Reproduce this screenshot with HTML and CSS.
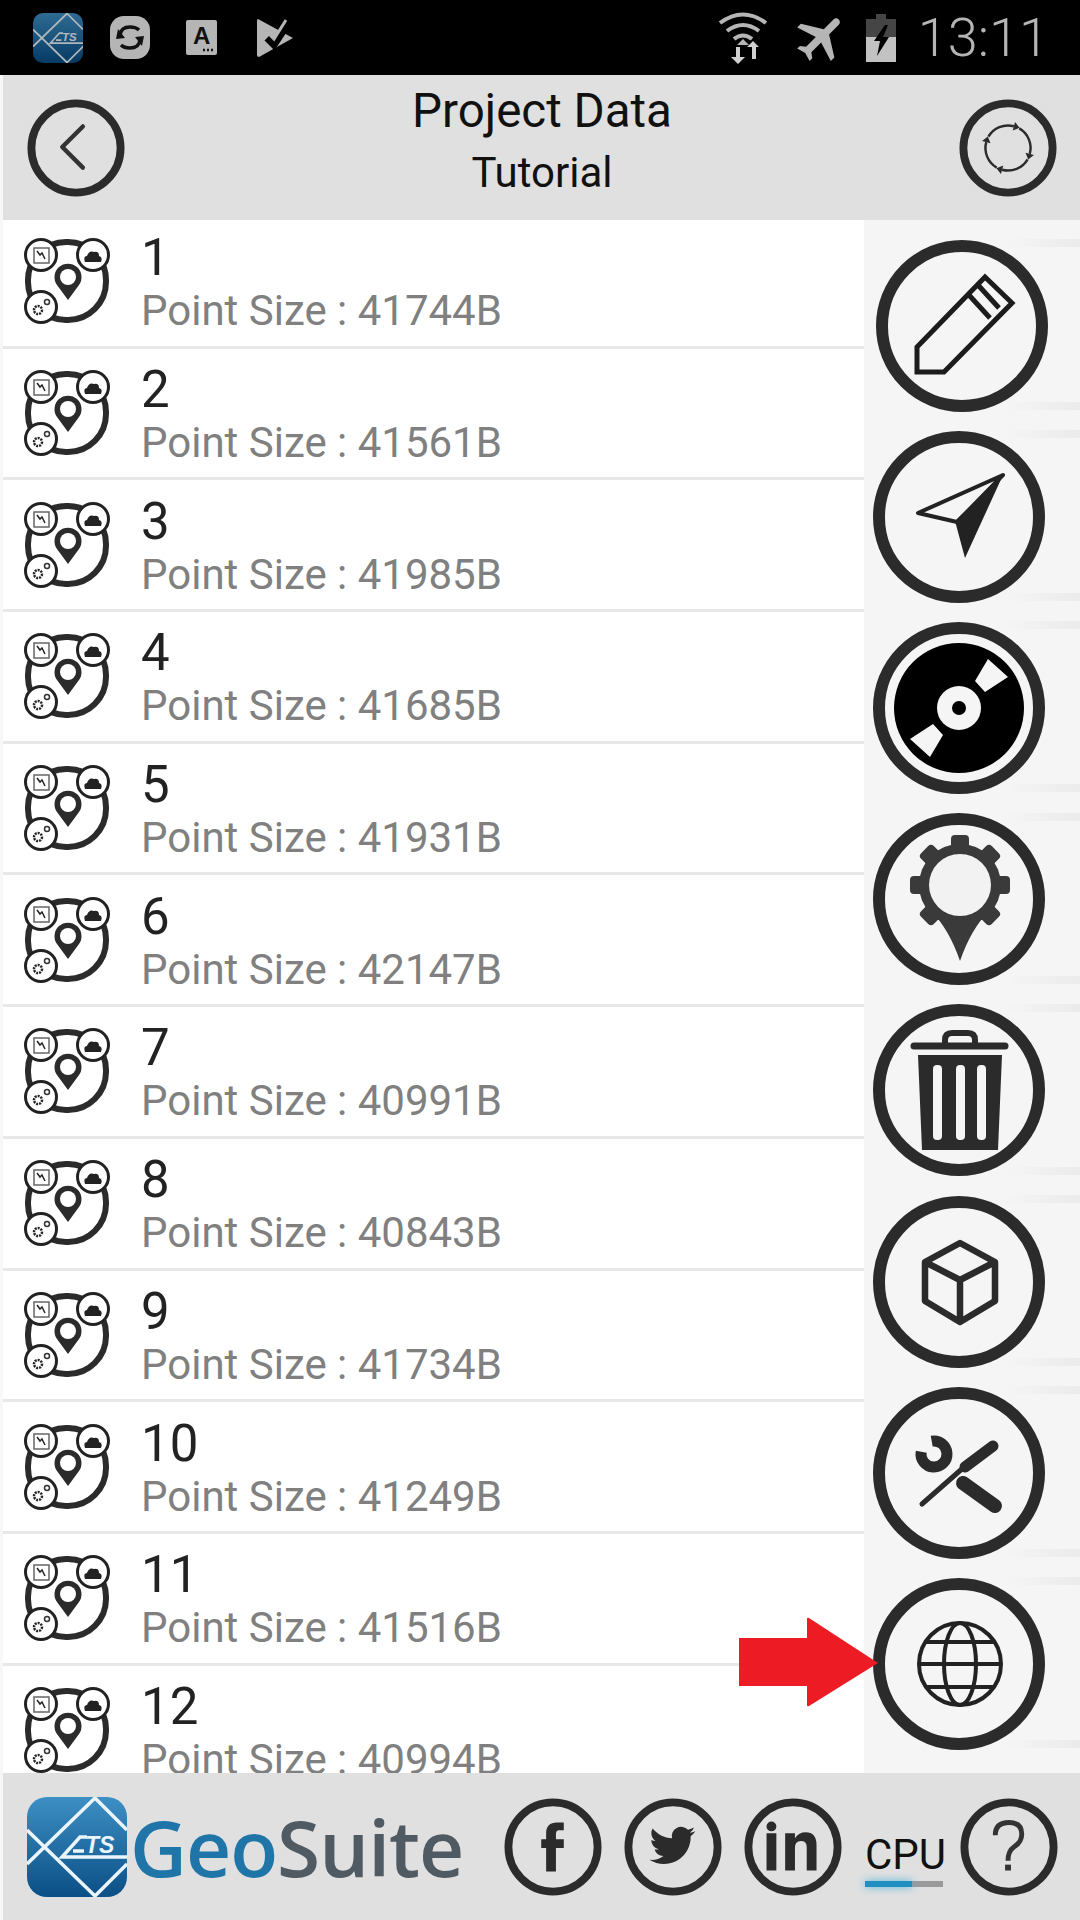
FILE: index.html
```html
<!DOCTYPE html>
<html lang="en">
<head>
<meta charset="UTF-8">
<meta name="viewport" content="width=device-width, initial-scale=1.0">
<title>Project Data</title>
<link rel="stylesheet" href="styles.css">
</head>
<body>

<svg class="defs" width="0" height="0">
    <defs>
        <linearGradient id="logoBlue" x1="0" y1="0" x2="0" y2="1">
            <stop offset="0" stop-color="#3d8fc4"/>
            <stop offset="1" stop-color="#0a4f86"/>
        </linearGradient>
    </defs>
    <symbol id="logo" viewBox="0 0 100 100">
        <rect width="100" height="100" rx="20" fill="url(#logoBlue)"/>
        <path d="M100 33 L68 1 L0 67 M100 67 L68 99 L0 33" fill="none" stroke="#eaf5fb" stroke-width="3.500"/>
        <path d="M100 60 H35 L53 40 H60 M46 54 H57" fill="none" stroke="#eaf5fb" stroke-width="3.500"/>
        <text x="58" y="56" class="logo-ts">TS</text>
    </symbol>
    <symbol id="row-icon" viewBox="0 0 86 86">
        <rect x="4" y="4" width="78" height="78" rx="38" fill="#fff" stroke="#2b2b2b" stroke-width="6"/>
        <circle cx="17" cy="17" r="15.500" fill="#fff" stroke="#222" stroke-width="3"/>
        <circle cx="69" cy="17" r="15.500" fill="#fff" stroke="#222" stroke-width="3"/>
        <circle cx="17" cy="69" r="15.500" fill="#fff" stroke="#222" stroke-width="3"/>
        <rect x="10" y="10" width="15" height="15" fill="none" stroke="#666" stroke-width="1.500"/>
        <path d="M13 13 L16 17 L18 15 L21 21" fill="none" stroke="#222" stroke-width="1.500"/>
        <path d="M61 24 Q59 18 63 18 Q65 12 70 14 Q75 13 75 18 Q79 19 77 24 Z" fill="#222"/>
        <circle cx="14" cy="72" r="4" fill="none" stroke="#222" stroke-width="2.500" stroke-dasharray="2 1"/>
        <circle cx="23" cy="64" r="2.500" fill="none" stroke="#333" stroke-width="1.500"/>
        <path d="M44 62 L33 47 A13.500 13.500 0 1 1 55 47 Z" fill="#2b2b2b"/>
        <circle cx="44" cy="39" r="8" fill="#fff"/>
    </symbol>
    <symbol id="back" viewBox="0 0 100 100">
        <circle cx="50" cy="50" r="45.500" fill="none" stroke="#2b2b2b" stroke-width="8"/>
        <path d="M57 28 L36 49 L57 70" fill="none" stroke="#333" stroke-width="4.500" stroke-linecap="round" stroke-linejoin="round"/>
    </symbol>
    <symbol id="refresh-arc" viewBox="0 0 100 100">
        <path d="M30 38.500 A23 23 0 0 1 56 27.800" fill="none" stroke="#2b2b2b" stroke-width="2.500"/>
        <path d="M61.800 29.400 L57.200 23.500 L54.800 32.100 Z" fill="#2b2b2b"/>
    </symbol>
    <symbol id="refresh" viewBox="0 0 100 100">
        <circle cx="50" cy="50" r="45.500" fill="none" stroke="#2b2b2b" stroke-width="8"/>
        <use href="#refresh-arc" width="100" height="100"/>
        <use href="#refresh-arc" width="100" height="100" transform="rotate(90 50 50)"/>
        <use href="#refresh-arc" width="100" height="100" transform="rotate(180 50 50)"/>
        <use href="#refresh-arc" width="100" height="100" transform="rotate(270 50 50)"/>
    </symbol>
    <symbol id="pencil" viewBox="0 0 172 172">
        <circle cx="86" cy="86" r="80" fill="none" stroke="#2b2b2b" stroke-width="12"/>
        <path d="M41 132 V107 L109 37 L136 63 L68 132 Z M92 54 L114 78 M102 45 L123 68" fill="none" stroke="#1c1c1c" stroke-width="5"/>
    </symbol>
    <symbol id="nav" viewBox="0 0 172 172">
        <circle cx="86" cy="86" r="80" fill="none" stroke="#2b2b2b" stroke-width="12"/>
        <path d="M130 44 L45 82 L84 91 Z" fill="none" stroke="#222" stroke-width="4" stroke-linejoin="round"/>
        <path d="M130 44 L82 90 L92 127 Z" fill="#222"/>
    </symbol>
    <symbol id="disc" viewBox="0 0 172 172">
        <circle cx="86" cy="86" r="80" fill="none" stroke="#2b2b2b" stroke-width="12"/>
        <circle cx="86" cy="86" r="65" fill="#000"/>
        <circle cx="86" cy="86" r="22" fill="#f5f5f5"/>
        <circle cx="86" cy="86" r="7" fill="#000"/>
        <path d="M115 37 L135 55 L112 70 L102 59 Z M57 135 L37 117 L60 102 L70 113 Z" fill="#f5f5f5"/>
    </symbol>
    <symbol id="gearpin" viewBox="0 0 172 172">
        <circle cx="86" cy="86" r="80" fill="none" stroke="#2b2b2b" stroke-width="12"/>
        <g fill="#3a3a3a">
            <rect x="78" y="22" width="18" height="16" rx="4"/>
            <rect x="78" y="22" width="18" height="16" rx="4" transform="rotate(45 87 72)"/>
            <rect x="78" y="22" width="18" height="16" rx="4" transform="rotate(90 87 72)"/>
            <rect x="78" y="22" width="18" height="16" rx="4" transform="rotate(135 87 72)"/>
            <rect x="78" y="22" width="18" height="16" rx="4" transform="rotate(225 87 72)"/>
            <rect x="78" y="22" width="18" height="16" rx="4" transform="rotate(270 87 72)"/>
            <rect x="78" y="22" width="18" height="16" rx="4" transform="rotate(315 87 72)"/>
            <circle cx="87" cy="72" r="41"/>
            <path d="M58 98 L116 98 Q98 116 87 148 Q76 116 58 98 Z"/>
        </g>
        <circle cx="87" cy="72" r="31" fill="#f2f2f2"/>
    </symbol>
    <symbol id="trash" viewBox="0 0 172 172">
        <circle cx="86" cy="86" r="80" fill="none" stroke="#2b2b2b" stroke-width="12"/>
        <path d="M41 42 H132" fill="none" stroke="#2b2b2b" stroke-width="7" stroke-linecap="round"/>
        <path d="M72 40 V36 Q72 29 79 29 H95 Q102 29 102 36 V40" fill="none" stroke="#2b2b2b" stroke-width="6"/>
        <path d="M45 51 H129 L125 146 H49 Z" fill="#2b2b2b"/>
        <g fill="#f5f5f5">
            <rect x="60" y="61" width="9" height="75" rx="4"/>
            <rect x="83" y="61" width="9" height="75" rx="4"/>
            <rect x="104" y="61" width="9" height="75" rx="4"/>
        </g>
    </symbol>
    <symbol id="cube" viewBox="0 0 172 172">
        <circle cx="86" cy="86" r="80" fill="none" stroke="#2b2b2b" stroke-width="12"/>
        <path d="M87 47 L122 66 V105 L87 126 L52 105 V66 Z M52 66 L87 84 L122 66 M87 84 V126" fill="none" stroke="#2b2b2b" stroke-width="6.500" stroke-linejoin="round"/>
    </symbol>
    <symbol id="tools" viewBox="0 0 172 172">
        <circle cx="86" cy="86" r="80" fill="none" stroke="#2b2b2b" stroke-width="12"/>
        <path d="M58.700 54.200 A13 13 0 1 1 48.200 64.700" fill="none" stroke="#2b2b2b" stroke-width="11"/>
        <path d="M90 96 L122 119" fill="none" stroke="#2b2b2b" stroke-width="14" stroke-linecap="round"/>
        <path d="M49 117 L90 81" fill="none" stroke="#2b2b2b" stroke-width="5" stroke-linecap="round"/>
        <path d="M92 80 L120 59" fill="none" stroke="#2b2b2b" stroke-width="11" stroke-linecap="round"/>
    </symbol>
    <symbol id="globe" viewBox="0 0 172 172">
        <circle cx="86" cy="86" r="80" fill="none" stroke="#2b2b2b" stroke-width="12"/>
        <g fill="none" stroke="#222" stroke-width="4">
            <circle cx="87" cy="86" r="41"/>
            <ellipse cx="87" cy="86" rx="16" ry="41"/>
            <path d="M53 64 H121 M46 86 H128 M53 109 H121"/>
        </g>
    </symbol>
    <symbol id="fb" viewBox="0 0 100 100">
        <circle cx="50" cy="50" r="45.500" fill="none" stroke="#2b2b2b" stroke-width="8"/>
        <path d="M43 75 V51 H38 V42 H43 V36 Q43 25 54 25 H61 V33 H56 Q53 33 53 37 V42 H61 V51 H53 V75 Z" fill="#2b2b2b"/>
    </symbol>
    <symbol id="tw" viewBox="0 0 100 100">
        <circle cx="50" cy="50" r="45.500" fill="none" stroke="#2b2b2b" stroke-width="8"/>
        <path transform="translate(26 25) scale(1.95)" d="M23.953 4.57a10 10 0 01-2.825.775 4.958 4.958 0 002.163-2.723c-.951.555-2.005.959-3.127 1.184a4.92 4.92 0 00-8.384 4.482C7.69 8.095 4.067 6.13 1.64 3.162a4.822 4.822 0 00-.666 2.475c0 1.71.87 3.213 2.188 4.096a4.904 4.904 0 01-2.228-.616v.06a4.923 4.923 0 003.946 4.827 4.996 4.996 0 01-2.212.085 4.936 4.936 0 004.604 3.417 9.867 9.867 0 01-6.102 2.105c-.39 0-.779-.023-1.17-.067a13.995 13.995 0 007.557 2.209c9.053 0 13.998-7.496 13.998-13.985 0-.21 0-.42-.015-.63A9.935 9.935 0 0024 4.59z" fill="#2b2b2b"/>
    </symbol>
    <symbol id="in" viewBox="0 0 100 100">
        <circle cx="50" cy="50" r="45.500" fill="none" stroke="#2b2b2b" stroke-width="8"/>
        <circle cx="28" cy="29" r="5" fill="#2b2b2b"/>
        <path d="M23 36 H33 V74 H23 Z M42 36 H52 V41 Q56 35 63 35 Q74 35 74 48 V74 H64 V50 Q64 44 58 44 Q52 44 52 51 V74 H42 Z" fill="#2b2b2b"/>
    </symbol>
    <symbol id="help" viewBox="0 0 100 100">
        <circle cx="50" cy="50" r="45.500" fill="none" stroke="#2b2b2b" stroke-width="8"/>
        <path d="M36 38 Q36 25 50 25 Q63 25 63 37 Q63 45 55 50 Q49 54 49 64" fill="none" stroke="#333" stroke-width="5"/>
        <rect x="46" y="68" width="6" height="6" fill="#333"/>
    </symbol>
</svg>

<div class="status-bar">
    <svg class="st-app"><use href="#logo"/></svg>
    <svg class="st-sync" viewBox="0 0 40 43">
        <rect width="40" height="43" rx="14" fill="#b5b5b5"/>
        <path d="M10 19 Q11 11 20 11 Q26 11 29 14 M30 24 Q29 32 20 32 Q14 32 11 29" fill="none" stroke="#111" stroke-width="3.500"/>
        <path d="M8 13 L15 22 L6 23 Z M32 30 L25 21 L34 20 Z" fill="#111"/>
    </svg>
    <svg class="st-a" viewBox="0 0 31 35">
        <rect width="31" height="35" rx="2" fill="#b5b5b5"/>
        <text x="7" y="24" class="st-a-text">A</text>
        <path d="M17 30 H19 M21 30 H23 M25 30 H27" stroke="#111" stroke-width="2.500"/>
    </svg>
    <svg class="st-check" viewBox="0 0 36 38">
        <path d="M1 0 L36 19 L2 38 Q0 38 0 36 V2 Q0 0 1 0 Z" fill="#b5b5b5"/>
        <path d="M10 19 L17 26 L32 3" fill="none" stroke="#000" stroke-width="7"/>
        <path d="M12 15 L17 20 L29 1" fill="none" stroke="#b5b5b5" stroke-width="3"/>
    </svg>
    <div class="status-gap"></div>
    <svg class="st-wifi" viewBox="0 0 50 52">
        <g fill="none" stroke="#b5b5b5" stroke-width="4">
            <path d="M2 11 Q25 -6 48 11"/>
            <path d="M9 19 Q25 7 41 19"/>
            <path d="M16 27 Q25 20 34 27"/>
        </g>
        <path d="M19 33 L25 27 L31 33 Z" fill="#b5b5b5"/>
        <path d="M18 35 V45 H13 L20 52 L27 45 H22 V35 Z M34 47 V35 H29 L35 29 L41 35 H38 V47 Z" fill="#d0d0d0"/>
    </svg>
    <svg class="st-plane" viewBox="0 0 24 24">
        <path transform="rotate(45 12 12)" d="M21 16v-2l-8-5V3.500c0-.83-.67-1.500-1.500-1.500S10 2.670 10 3.500V9l-8 5v2l8-2.500V19l-2 1.500V22l3.500-1 3.500 1v-1.500L13 19v-5.500l8 2.500z" fill="#b5b5b5"/>
    </svg>
    <svg class="st-batt" viewBox="0 0 30 48">
        <path d="M10 0 H20 V5 H30 V48 H0 V5 H10 Z" fill="#454545"/>
        <rect y="23" width="30" height="25" fill="#c2c2c2"/>
        <path d="M19 11 L8 27 H14 L11 42 L23 23 H17 L22 11 Z" fill="#000"/>
    </svg>
    <span class="clock">13:11</span>
</div>

<div class="app">
    <div class="top-bar">
        <svg class="round-btn"><use href="#back"/></svg>
        <div class="titles">
            <div class="title">Project Data</div>
            <div class="subtitle">Tutorial</div>
        </div>
        <svg class="round-btn"><use href="#refresh"/></svg>
    </div>

    <div class="main">
        <ul class="points">
            <li class="point"><svg class="point-icon"><use href="#row-icon"/></svg><div><div class="point-name">1</div><div class="point-size">Point Size : 41744B</div></div></li>
            <li class="point"><svg class="point-icon"><use href="#row-icon"/></svg><div><div class="point-name">2</div><div class="point-size">Point Size : 41561B</div></div></li>
            <li class="point"><svg class="point-icon"><use href="#row-icon"/></svg><div><div class="point-name">3</div><div class="point-size">Point Size : 41985B</div></div></li>
            <li class="point"><svg class="point-icon"><use href="#row-icon"/></svg><div><div class="point-name">4</div><div class="point-size">Point Size : 41685B</div></div></li>
            <li class="point"><svg class="point-icon"><use href="#row-icon"/></svg><div><div class="point-name">5</div><div class="point-size">Point Size : 41931B</div></div></li>
            <li class="point"><svg class="point-icon"><use href="#row-icon"/></svg><div><div class="point-name">6</div><div class="point-size">Point Size : 42147B</div></div></li>
            <li class="point"><svg class="point-icon"><use href="#row-icon"/></svg><div><div class="point-name">7</div><div class="point-size">Point Size : 40991B</div></div></li>
            <li class="point"><svg class="point-icon"><use href="#row-icon"/></svg><div><div class="point-name">8</div><div class="point-size">Point Size : 40843B</div></div></li>
            <li class="point"><svg class="point-icon"><use href="#row-icon"/></svg><div><div class="point-name">9</div><div class="point-size">Point Size : 41734B</div></div></li>
            <li class="point"><svg class="point-icon"><use href="#row-icon"/></svg><div><div class="point-name">10</div><div class="point-size">Point Size : 41249B</div></div></li>
            <li class="point"><svg class="point-icon"><use href="#row-icon"/></svg><div><div class="point-name">11</div><div class="point-size">Point Size : 41516B</div></div></li>
            <li class="point"><svg class="point-icon"><use href="#row-icon"/></svg><div><div class="point-name">12</div><div class="point-size">Point Size : 40994B</div></div></li>
        </ul>

        <div class="side">
            <div class="side-item side-first"><svg class="side-btn"><use href="#pencil"/></svg></div>
            <div class="side-item"><svg class="side-btn"><use href="#nav"/></svg></div>
            <div class="side-item"><svg class="side-btn"><use href="#disc"/></svg></div>
            <div class="side-item"><svg class="side-btn"><use href="#gearpin"/></svg></div>
            <div class="side-item"><svg class="side-btn"><use href="#trash"/></svg></div>
            <div class="side-item"><svg class="side-btn"><use href="#cube"/></svg></div>
            <div class="side-item"><svg class="side-btn"><use href="#tools"/></svg></div>
            <div class="side-item"><svg class="side-btn"><use href="#globe"/></svg></div>
        </div>

        <svg class="red-arrow" viewBox="0 0 140 90">
            <path d="M1 21 H69 V2 Q69 0 71 1 L140 46 L71 89 Q69 90 69 88 V69 H1 Z" fill="#ed1c24"/>
        </svg>
    </div>

    <div class="bottom-bar">
        <svg class="brand-logo"><use href="#logo"/></svg>
        <div class="brand"><span class="brand-geo">Geo</span><span class="brand-suite">Suite</span></div>
        <div class="socials">
            <svg class="round-btn"><use href="#fb"/></svg>
            <svg class="round-btn"><use href="#tw"/></svg>
            <svg class="round-btn"><use href="#in"/></svg>
        </div>
        <div class="cpu">
            <div class="cpu-label">CPU</div>
            <div class="cpu-bar"><div class="cpu-fill"></div></div>
        </div>
        <svg class="round-btn"><use href="#help"/></svg>
    </div>
</div>

</body>
</html>
```

FILE: styles.css
```css
* {
    box-sizing: border-box;
}

html, body {
    margin: 0;
    padding: 0;
    height: 1920px;
    overflow: hidden;
}

body {
    font-family: Roboto, Arial, sans-serif;
    background-color: #f7f7f7;
    display: flex;
    flex-direction: column;
}

.defs {
    position: absolute;
}

.logo-ts {
    font-family: "Liberation Sans", sans-serif;
    font-size: 23px;
    font-weight: bold;
    font-style: italic;
    fill: #eaf5fb;
}

/* status bar */
.status-bar {
    height: 75px;
    flex: none;
    background-color: #000;
    display: flex;
    align-items: center;
    padding-left: 33px;
    padding-right: 31px;
}

.st-app {
    width: 50px;
    height: 50px;
    opacity: 0.75;
}

.st-sync {
    width: 40px;
    height: 43px;
    margin-left: 27px;
}

.st-a {
    width: 31px;
    height: 35px;
    margin-left: 36px;
}

.st-a-text {
    font-family: "Liberation Sans", sans-serif;
    font-size: 24px;
    font-weight: bold;
    fill: #111;
}

.st-check {
    width: 36px;
    height: 38px;
    margin-left: 40px;
}

.status-gap {
    flex: 1;
}

.st-wifi {
    width: 50px;
    height: 52px;
}

.st-plane {
    width: 60px;
    height: 60px;
    margin-left: 24px;
}

.st-batt {
    width: 30px;
    height: 48px;
    margin-left: 14px;
}

.clock {
    font-weight: 300;
    font-size: 54px;
    color: #b5b5b5;
    margin-left: 22px;
}

/* page */
.app {
    flex: 1;
    min-height: 0;
    padding-left: 3px;
    display: flex;
    flex-direction: column;
}

.top-bar {
    height: 145px;
    flex: none;
    background-color: #e0e0e0;
    display: flex;
    align-items: center;
    padding: 0 23px 0 24px;
}

.round-btn {
    width: 98px;
    height: 98px;
    flex: none;
}

.titles {
    flex: 1;
    text-align: center;
    color: #111;
    margin-bottom: 14px;
}

.title {
    font-size: 47.5px;
    line-height: 56px;
}

.subtitle {
    font-size: 42px;
    line-height: 50px;
    margin-top: 9px;
}

.main {
    flex: 1;
    min-height: 0;
    display: flex;
    overflow: hidden;
    position: relative;
}

/* list */
.points {
    list-style-type: none;
    padding: 0;
    margin: -3px 0 0 0;
    width: 861px;
    flex: none;
    background-color: #fff;
}

.point {
    height: 131.7px;
    border-bottom: 3px solid #e8e8e8;
    display: flex;
    align-items: center;
    padding-left: 21px;
}

.point-icon {
    width: 86px;
    height: 86px;
    flex: none;
    margin-right: 31px;
}

.point-name {
    font-size: 51px;
    line-height: 56px;
    color: #222;
    margin-top: 2px;
}

.point-size {
    font-size: 42px;
    line-height: 46px;
    color: #808080;
    margin-top: 2px;
}

/* right column */
.side {
    flex: 1;
    background-color: #f5f5f5;
    padding-top: 10px;
}

.side-item {
    height: 191.2px;
    padding-left: 9px;
    display: flex;
    align-items: center;
    background-image: linear-gradient(to right, transparent 65%, #ebebeb), linear-gradient(to right, transparent 65%, #ebebeb);
    background-size: 100% 8px;
    background-position: 0 9px, 0 172px;
    background-repeat: no-repeat;
}

.side-first {
    padding-left: 12px;
}

.side-btn {
    width: 172px;
    height: 172px;
}

.red-arrow {
    position: absolute;
    left: 735px;
    top: 1397px;
    width: 140px;
    height: 90px;
}

/* footer */
.bottom-bar {
    height: 147px;
    flex: none;
    background-color: #e0e0e0;
    display: flex;
    align-items: center;
    padding-left: 24px;
}

.brand-logo {
    width: 100px;
    height: 100px;
    flex: none;
}

.brand {
    font-family: "Open Sans", sans-serif;
    font-weight: 600;
    font-size: 78.5px;
    letter-spacing: -1px;
    width: 374px;
    margin-left: 3px;
    white-space: nowrap;
}

.brand-geo {
    color: #1f74a8;
}

.brand-suite {
    color: #4f5a63;
}

.socials {
    display: flex;
    gap: 22px;
}

.cpu {
    width: 78px;
    margin-left: 23px;
    margin-right: 17px;
    align-self: flex-end;
    padding-bottom: 33px;
}

.cpu-label {
    font-size: 42px;
    line-height: 42px;
    color: #111;
    text-align: center;
}

.cpu-bar {
    height: 6px;
    margin-top: 5px;
    background-color: #9a9a9a;
}

.cpu-fill {
    width: 47px;
    height: 6px;
    background-color: #2090c0;
    box-shadow: 0 0 8px #4fb4e0;
}
```
